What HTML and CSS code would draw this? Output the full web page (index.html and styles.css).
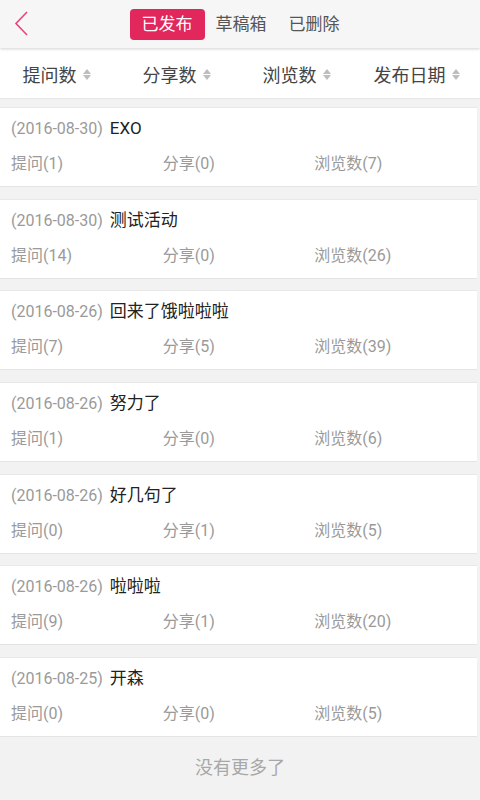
FILE: index.html
```html
<!DOCTYPE html>
<html lang="zh-CN">

<head>
    <meta charset="UTF-8" />
    <meta name="viewport" content="width=device-width, initial-scale=1.0" />
    <title>我的活动</title>
    <link rel="stylesheet" href="styles.css">
</head>

<body>
    <header class="top-bar">
        <a class="back" href="#">
            <svg width="16" height="26" viewBox="0 0 16 26">
                <polyline points="13,1 2,12.5 13,24" fill="none" stroke="#e8457a" stroke-width="1.6" />
            </svg>
        </a>
        <nav class="tabs">
            <span class="tab active">已发布</span>
            <span class="tab">草稿箱</span>
            <span class="tab">已删除</span>
        </nav>
    </header>

    <div class="sort-bar">
        <div class="sort">提问数<i class="arrows"></i></div>
        <div class="sort">分享数<i class="arrows"></i></div>
        <div class="sort">浏览数<i class="arrows"></i></div>
        <div class="sort">发布日期<i class="arrows"></i></div>
    </div>

    <div class="list" id="list"></div>

    <div class="no-more">没有更多了</div>

    <script>
        const items = [
            ['2016-08-30', 'EXO', 1, 0, 7],
            ['2016-08-30', '测试活动', 14, 0, 26],
            ['2016-08-26', '回来了饿啦啦啦', 7, 5, 39],
            ['2016-08-26', '努力了', 1, 0, 6],
            ['2016-08-26', '好几句了', 0, 1, 5],
            ['2016-08-26', '啦啦啦', 9, 1, 20],
            ['2016-08-25', '开森', 0, 0, 5]
        ];
        const list = document.getElementById('list');
        items.forEach(item => {
            const div = document.createElement('div');
            div.className = 'card';
            div.innerHTML = `
          <div class="card-title"><span class="date">(${item[0]})</span>${item[1]}</div>
          <div class="stats">
            <span>提问(${item[2]})</span>
            <span>分享(${item[3]})</span>
            <span>浏览数(${item[4]})</span>
          </div>
        `;
            list.appendChild(div);
        });
    </script>
</body>

</html>
```

FILE: styles.css
```css
:root {
    --rosa: #e1275b;
    --fundo: #f2f2f2;
    --cinza: #9a9a9a;
    --texto: #222222;
}

* {
    box-sizing: border-box;
}

body {
    margin: 0;
    font-family: Roboto, "Noto Sans CJK SC", sans-serif;
    background-color: var(--fundo);
    color: var(--texto);
}

.top-bar {
    position: relative;
    height: 48px;
    background: #f6f6f6;
    box-shadow: 0 1px 3px rgba(0, 0, 0, 0.18);
    display: flex;
    align-items: center;
    justify-content: center;
    z-index: 1;
}

.back {
    position: absolute;
    left: 14px;
    top: 11px;
    display: block;
    height: 26px;
}

.tabs {
    display: flex;
    align-items: center;
    margin-top: 1px;
}

.tab {
    font-size: 17px;
    line-height: 31px;
    padding: 0 11px;
    color: #555;
}

.tab.active {
    background: var(--rosa);
    color: #fff;
    padding: 0 12px;
    border-radius: 4px;
}

.sort-bar {
    display: grid;
    grid-template-columns: repeat(4, 1fr);
    height: 51px;
    background: #fff;
    border-bottom: 1px solid #e6e6e6;
    margin-bottom: 8px;
}

.sort {
    display: flex;
    align-items: center;
    justify-content: center;
    font-size: 18px;
    color: #444;
    padding-right: 6px;
    padding-top: 2px;
}

.arrows {
    position: relative;
    width: 9px;
    height: 11px;
    margin-left: 6px;
}

.arrows::before,
.arrows::after {
    content: "";
    position: absolute;
    left: 0;
    border-left: 4.5px solid transparent;
    border-right: 4.5px solid transparent;
}

.arrows::before {
    top: 0;
    border-bottom: 5px solid #bdbdbd;
}

.arrows::after {
    bottom: 0;
    border-top: 5px solid #bdbdbd;
}

.list {
    display: flex;
    flex-direction: column;
    gap: 11.7px;
}

.card {
    height: 80px;
    background: #fff;
    border-top: 1px solid #e8e8e8;
    border-bottom: 1px solid #e4e4e4;
    margin-right: 3px;
    padding: 8px 11px 0;
}

.card-title {
    font-size: 17px;
    line-height: 24px;
    color: var(--texto);
}

.date {
    font-size: 16px;
    color: var(--cinza);
    margin-right: 7px;
}

.stats {
    display: grid;
    grid-template-columns: repeat(3, 1fr);
    margin-top: 13px;
    font-size: 16px;
    line-height: 20px;
    color: var(--cinza);
}

.no-more {
    text-align: center;
    font-size: 18px;
    color: #a8a8a8;
    padding-top: 16px;
}
```
